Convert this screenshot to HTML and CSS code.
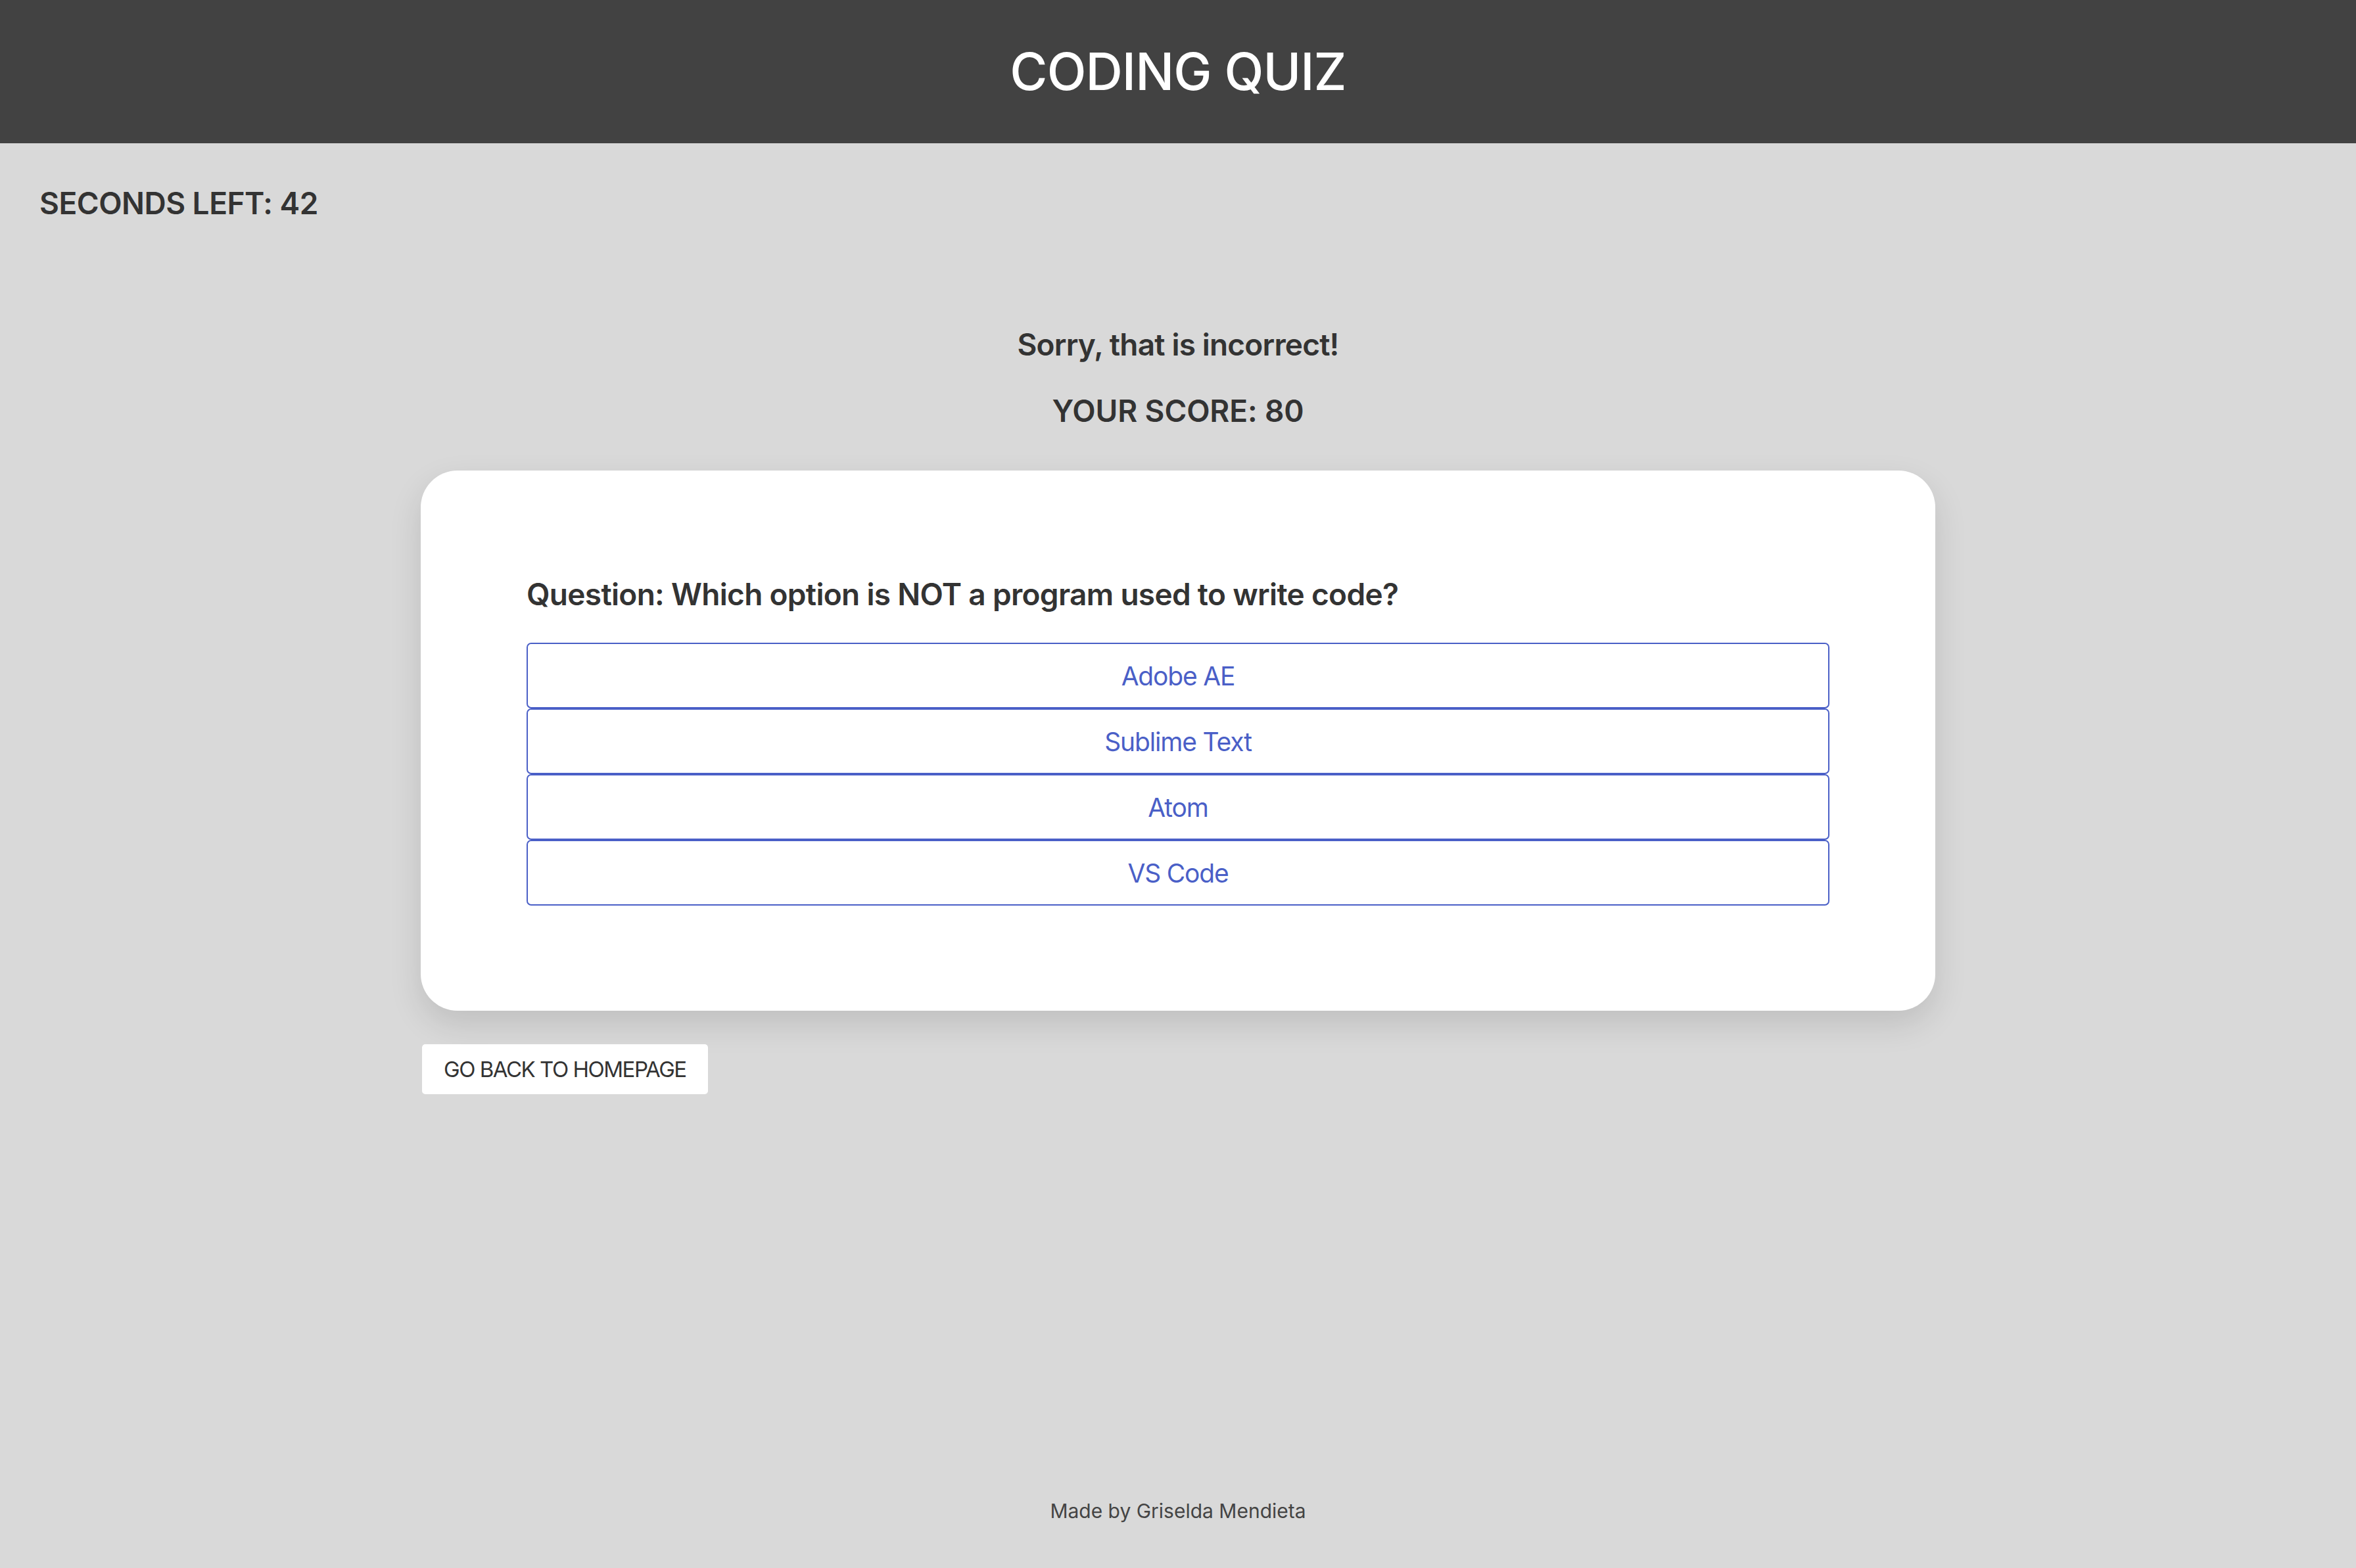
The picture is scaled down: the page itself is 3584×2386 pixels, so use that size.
FILE: index.html
```html
<!DOCTYPE html>
<html lang="en">
<head>
<meta charset="utf-8">
<title>Coding Quiz</title>
<link rel="stylesheet" href="styles.css">
</head>
<body>
<header class="site-header">
  <h1 class="site-title">CODING QUIZ</h1>
</header>
<div class="timer">SECONDS LEFT: 42</div>
<main class="main">
  <p class="feedback">Sorry, that is incorrect!</p>
  <p class="score">YOUR SCORE: 80</p>
  <section class="card">
    <h2 class="question">Question: Which option is NOT a program used to write code?</h2>
    <div class="options">
      <button class="option">Adobe AE</button>
      <button class="option">Sublime Text</button>
      <button class="option">Atom</button>
      <button class="option">VS Code</button>
    </div>
  </section>
  <div class="actions">
    <button class="back-btn">GO BACK TO HOMEPAGE</button>
  </div>
</main>
<footer class="footer">Made by Griselda Mendieta</footer>
</body>
</html>
```

FILE: styles.css
```css
* { box-sizing: border-box; }

html, body {
  margin: 0;
  padding: 0;
}

body {
  min-height: 100vh;
  display: flex;
  flex-direction: column;
  background: #d9d9d9;
  color: #333333;
  font-family: Inter, "Noto Sans", "Liberation Sans", sans-serif;
}

.site-header {
  height: 218px;
  background: #424242;
  display: flex;
  align-items: center;
  justify-content: center;
}

.site-title {
  margin: 0;
  color: #ffffff;
  font-size: 78px;
  font-weight: 500;
  line-height: 1.21;
  letter-spacing: -0.012em;
}

.timer {
  margin: 63px 0 0 60px;
  font-size: 46px;
  font-weight: 600;
  line-height: 56px;
  letter-spacing: -0.011em;
}

.main {
  width: 2304px;
  margin: 0 auto;
  display: flex;
  flex-direction: column;
}

.feedback {
  margin: 159px 0 0;
  text-align: center;
  font-size: 46px;
  font-weight: 600;
  line-height: 56px;
  letter-spacing: -0.018em;
}

.score {
  margin: 45px 0 0;
  text-align: center;
  font-size: 46px;
  font-weight: 600;
  line-height: 56px;
  letter-spacing: -0.003em;
}

.card {
  margin-top: 63px;
  background: #ffffff;
  border-radius: 56px;
  padding: 160px 161px;
  box-shadow: 0 20px 50px rgba(0, 0, 0, 0.12);
}

.question {
  margin: 0 0 46px;
  font-size: 46px;
  font-weight: 600;
  line-height: 56px;
  letter-spacing: -0.015em;
}

.options {
  display: flex;
  flex-direction: column;
}

.option {
  height: 100px;
  background: #ffffff;
  border: 2px solid #4a5fc7;
  border-radius: 7px;
  color: #4a5fc7;
  font-family: inherit;
  font-size: 39px;
  font-weight: 400;
  letter-spacing: -0.03em;
  cursor: pointer;
}

.actions {
  margin-top: 51px;
  display: flex;
}

.back-btn {
  margin-left: 2px;
  height: 76px;
  padding: 0 33px;
  background: #ffffff;
  border: none;
  border-radius: 5px;
  color: #333333;
  font-family: inherit;
  font-size: 33px;
  font-weight: 400;
  letter-spacing: -0.045em;
}

.footer {
  margin-top: auto;
  padding-bottom: 69px;
  text-align: center;
  color: #444444;
  font-size: 30px;
  line-height: 36px;
}
```
